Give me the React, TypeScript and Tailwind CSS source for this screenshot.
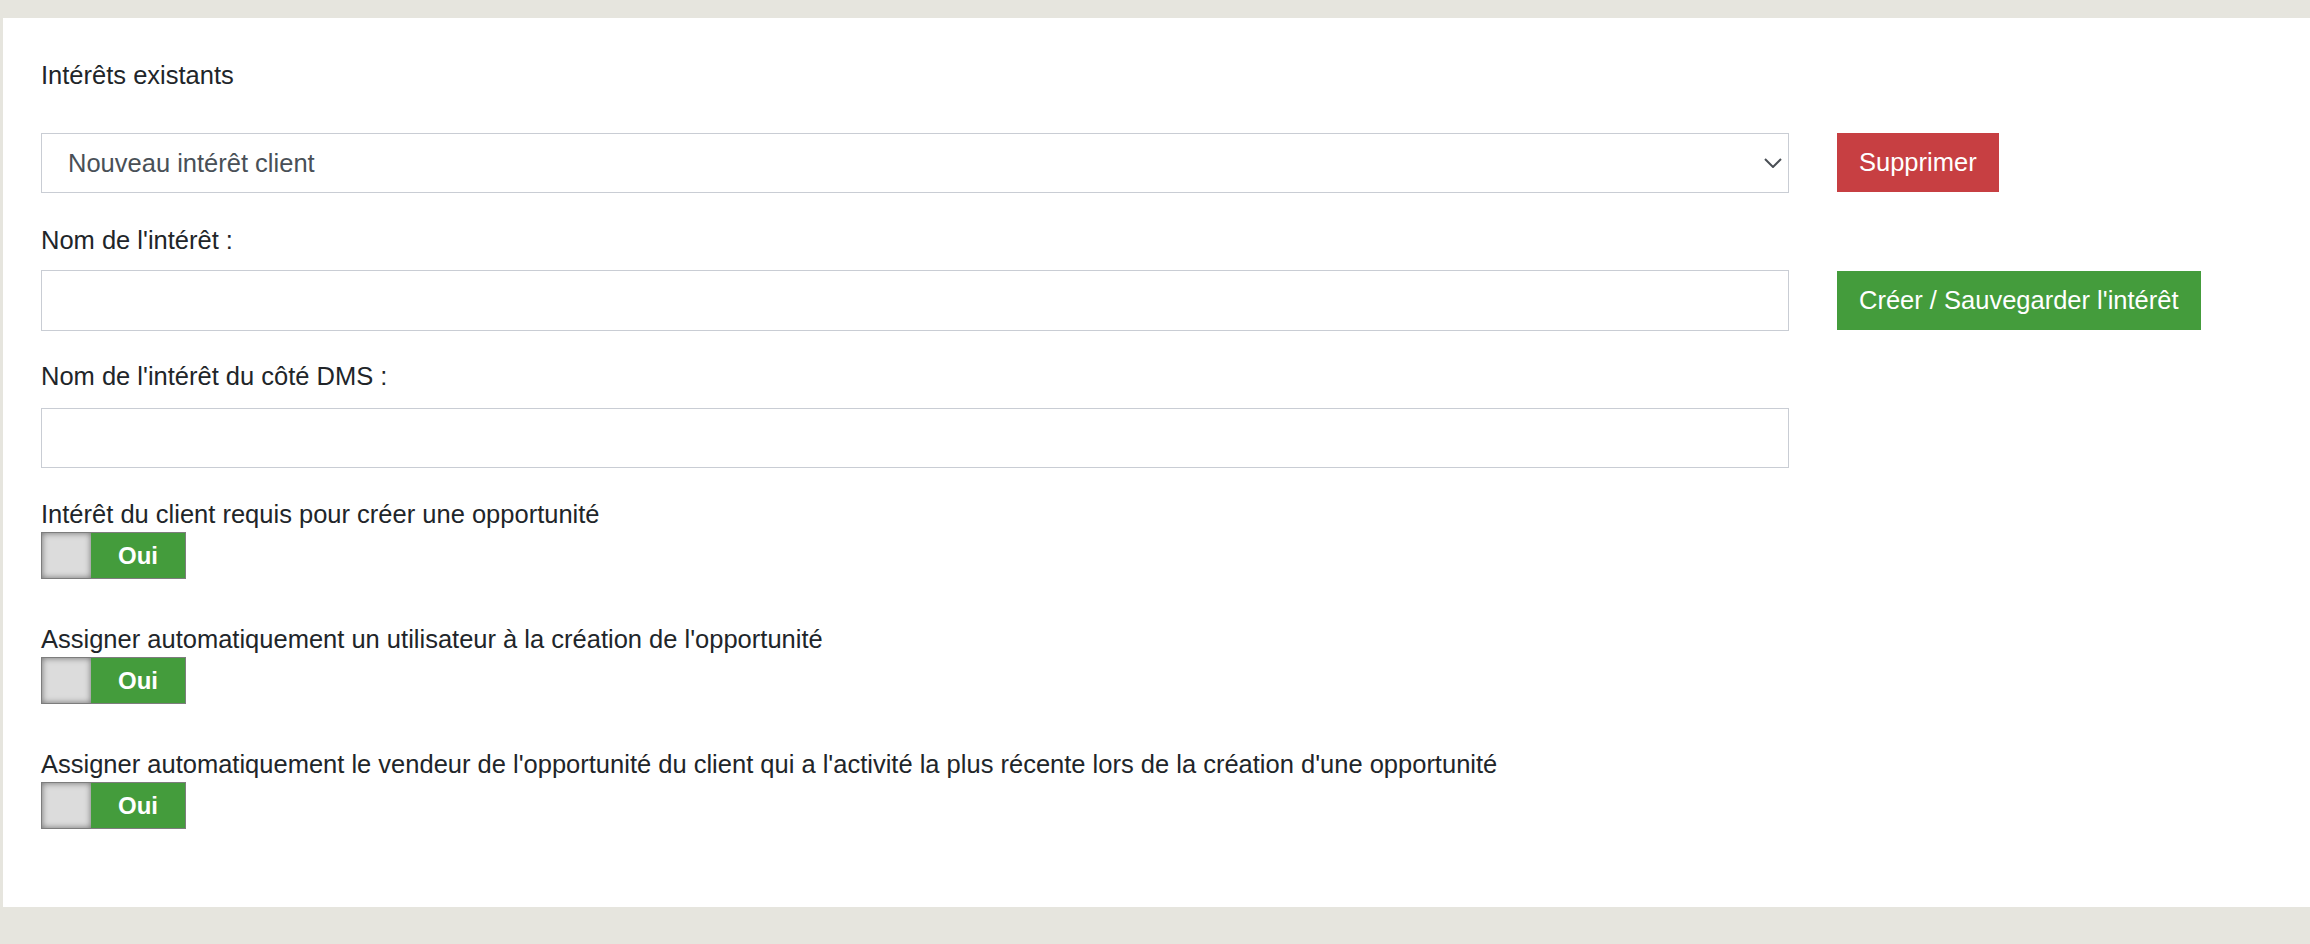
import { useState } from "react";

const TOGGLES = [
  "Intérêt du client requis pour créer une opportunité",
  "Assigner automatiquement un utilisateur à la création de l'opportunité",
  "Assigner automatiquement le vendeur de l'opportunité du client qui a l'activité la plus récente lors de la création d'une opportunité",
];

function Toggle({ on, onClick }: { on: boolean; onClick: () => void }) {
  return (
    <button
      type="button"
      onClick={onClick}
      className="flex h-[47px] w-[145px] border-[1.5px] border-[#7d7d7d] bg-white p-0"
    >
      <span className="h-full w-[49px] bg-[#dcdcdc] shadow-[inset_0_0_6px_rgba(0,0,0,0.5)]" />
      <span className="flex h-full flex-1 items-center justify-center bg-[#449c3c] text-[24px] font-bold text-white">
        {on ? "Oui" : "Non"}
      </span>
    </button>
  );
}

export default function App() {
  const [values, setValues] = useState([true, true, true]);

  const flip = (i: number) =>
    setValues((v) => v.map((x, j) => (j === i ? !x : x)));

  return (
    <div className="min-h-screen bg-[#e6e5de] pt-[18px] pl-[3px] font-['Liberation_Sans',Arial,sans-serif] text-[#212529]">
      <div className="bg-white pt-[39px] pb-[78px] pl-[38px]">
        <div className="text-[25.5px] leading-[36px]">Intérêts existants</div>

        <div className="mt-[40px] flex items-start gap-[48px]">
          <div className="relative w-[1748px]">
            <select className="h-[60px] w-full appearance-none border border-[#c9cdd4] bg-white pl-[26px] text-[25.5px] text-[#495057] outline-none">
              <option>Nouveau intérêt client</option>
            </select>
            <svg
              className="pointer-events-none absolute top-[25px] right-[7px] h-[10px] w-[18px]"
              viewBox="0 0 18 10"
              fill="none"
              stroke="#4a4f55"
              strokeWidth="2"
            >
              <path d="M1 1l8 8 8-8" />
            </svg>
          </div>
          <button className="h-[59px] bg-[#c73f42] px-[22px] text-[25.5px] text-white">
            Supprimer
          </button>
        </div>

        <div className="mt-[29px] flex items-end gap-[48px]">
          <div className="w-[1748px]">
            <label className="block text-[25.5px] leading-[36px]">
              Nom de l'intérêt :
            </label>
            <input className="mt-[12px] block h-[61px] w-full border border-[#c9cdd4] outline-none" />
          </div>
          <button className="mb-[1px] h-[59px] bg-[#449c3c] px-[22px] text-[25.5px] text-white">
            Créer / Sauvegarder l'intérêt
          </button>
        </div>

        <label className="mt-[27px] block text-[25.5px] leading-[36px]">
          Nom de l'intérêt du côté DMS :
        </label>
        <input className="mt-[14px] block h-[60px] w-[1748px] border border-[#c9cdd4] outline-none" />

        <div className="mt-[28px] flex flex-col gap-[42px]">
          {TOGGLES.map((label, i) => (
            <div key={label}>
              <div className="text-[25.5px] leading-[36px]">{label}</div>
              <Toggle on={values[i]} onClick={() => flip(i)} />
            </div>
          ))}
        </div>
      </div>
    </div>
  );
}
